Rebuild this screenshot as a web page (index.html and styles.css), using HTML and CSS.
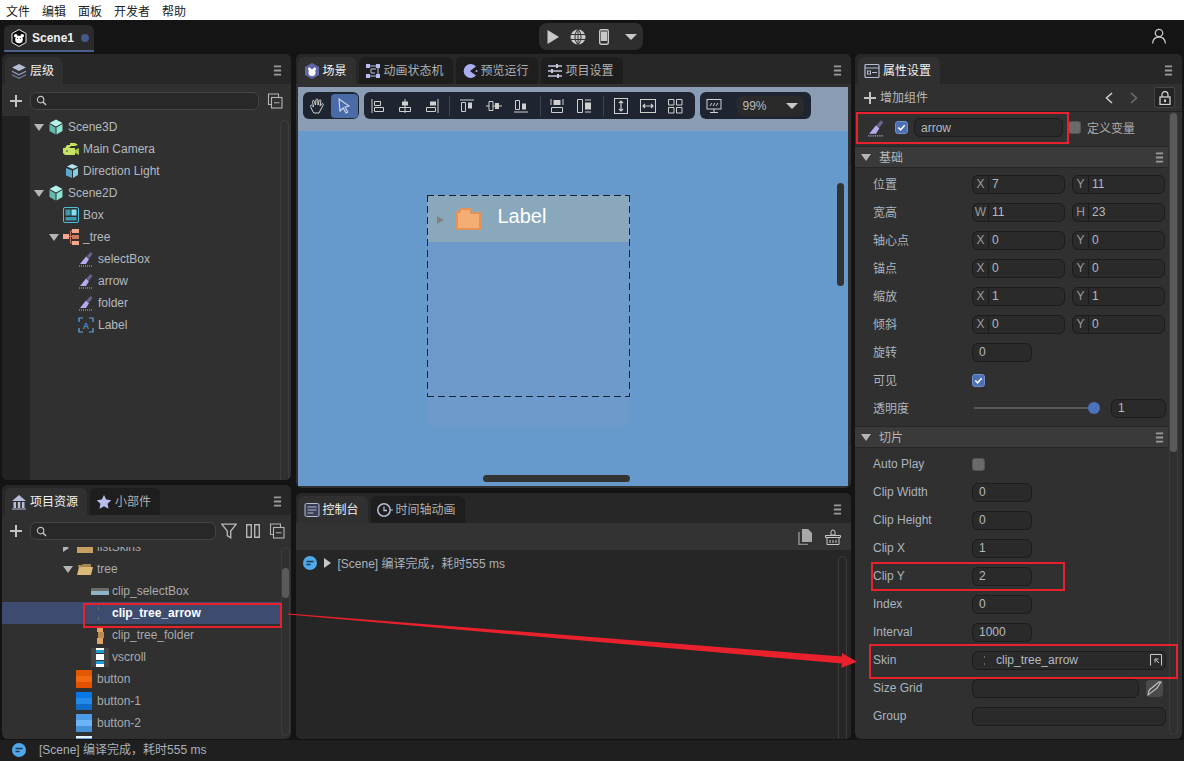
FILE: index.html
```html
<!DOCTYPE html>
<html>
<head>
    <meta charset="utf-8" />
    <title>LayaAir IDE</title>
    <link rel="stylesheet" href="styles.css">
</head>
<body>
    <!-- shared icons -->
    <svg class="defs" width="0" height="0">
        <symbol id="i-menu" viewBox="0 0 10 12"><path d="M1 1.500h8M1 6h8M1 10.500h8" stroke="#9a9a9a" stroke-width="2" fill="none"/></symbol>
        <symbol id="i-brush" viewBox="0 0 16 16"><path d="M12.500 1L14.500 3 11 7.500 8.500 5.500z" fill="#6b6290"/><path d="M8 5.500L11 8.200 8 13H2z" fill="#b9a9f0"/><path d="M1 15h14" stroke="#b9a9f0" stroke-dasharray="1 1" fill="none"/></symbol>
        <symbol id="i-cube" viewBox="0 0 16 16"><path d="M8 .5L14.500 4 8 7.500 1.500 4z" fill="#b4f4e8"/><path d="M1.500 5L7.500 8.500V15.500L1.500 12z" fill="#64b8ac"/><path d="M14.500 5L8.500 8.500V15.500L14.500 12z" fill="#8ce4d4"/></symbol>
        <symbol id="i-box3" viewBox="0 0 16 16"><path d="M9 1L15 3.500 10 6 4 3.500z" fill="#b5e4f0"/><path d="M3 5L9 7.500V15L3 12.500z" fill="#5ba8cc"/><path d="M10 7.500L15 5V12L10 15z" fill="#86cde6"/></symbol>
        <symbol id="i-cam" viewBox="0 0 16 16"><path d="M0 7h12v7H2l-2-2z" fill="#c6e264"/><path d="M12 9l4-2v7l-4-2z" fill="#a9c654"/><path d="M2 7l2-3h3V2h5l3 2-3 1H8L6 7z" fill="#c6e264"/><circle cx="4" cy="10" r="1" fill="#6d7d38"/></symbol>
        <symbol id="i-boxui" viewBox="0 0 16 16"><rect x=".5" y=".5" width="15" height="15" rx="1.500" fill="none" stroke="#53bcd8"/><rect x="2.500" y="2.500" width="5" height="6" fill="#3d97b0"/><rect x="8.500" y="2.500" width="5" height="6" fill="#7fe0f4"/><rect x="2.500" y="10" width="11" height="3.500" fill="#3d97b0"/></symbol>
        <symbol id="i-treeui" viewBox="0 0 16 16"><rect x="0" y="5" width="6" height="5" fill="#f5a78e"/><rect x="9" y="0" width="7" height="4" fill="#f5a78e"/><rect x="9" y="6" width="7" height="4" fill="#c9775f"/><rect x="9" y="12" width="7" height="4" fill="#f5a78e"/><path d="M6 7.500h3M7.500 2v12H9M7.500 2H9" stroke="#c9775f" fill="none"/></symbol>
        <symbol id="i-search" viewBox="0 0 12 12"><circle cx="5" cy="5" r="3.500" stroke="#bdbdbd" stroke-width="1.300" fill="none"/><path d="M7.500 7.500L11 11" stroke="#bdbdbd" stroke-width="1.600"/></symbol>
        <symbol id="i-collapse" viewBox="0 0 16 16"><path d="M4 11.500H1.500V1h10v3" fill="none" stroke="#b5b5b5" stroke-width="1.100"/><rect x="4.500" y="4.500" width="10.500" height="10.500" fill="none" stroke="#b5b5b5" stroke-width="1.100"/><path d="M7 9.800h5.500" stroke="#b5b5b5" stroke-width="1.100"/></symbol>
        <symbol id="i-plus" viewBox="0 0 12 12"><path d="M6 0v12M0 6h12" stroke="#c4c4c4" stroke-width="2"/></symbol>
        <symbol id="i-folder" viewBox="0 0 16 12"><path d="M0 1h6l1 2h9v9H0z" fill="#c6a062"/></symbol>
        <symbol id="i-folder-open" viewBox="0 0 16 12"><path d="M1 2h4l1-1h8v3H1z" fill="#a6864f"/><path d="M2 4h14l-2 8H0z" fill="#dcb878"/></symbol>
        <symbol id="i-chat" viewBox="0 0 14 14"><circle cx="7" cy="7" r="7" fill="#4fa8ea"/><path d="M3.500 5.500h7M3.500 8.500h4" stroke="#23364a" stroke-width="1.400"/></symbol>
        <symbol id="i-scenetab" viewBox="0 0 16 16"><path d="M8 0l7 4v8l-7 4-7-4V4z" fill="#6067a8"/><circle cx="8" cy="9.500" r="3.500" fill="#fff"/><circle cx="5.500" cy="6" r="1.500" fill="#fff"/><circle cx="10.500" cy="6" r="1.500" fill="#fff"/></symbol>
    </svg>

    <div class="menubar">
        <span>文件</span><span>编辑</span><span>面板</span><span>开发者</span><span>帮助</span>
    </div>

    <div class="topbar">
        <div class="doctab">
            <svg class="doclogo" viewBox="0 0 16 18"><path d="M8 .5l7 4v9l-7 4-7-4v-9z" fill="#0b0b0b" stroke="#e6e6e6"/><circle cx="8" cy="10.500" r="3.800" fill="#fff"/><circle cx="4.800" cy="6.800" r="1.800" fill="#fff"/><circle cx="11.200" cy="6.800" r="1.800" fill="#fff"/><circle cx="6.500" cy="9.500" r=".6" fill="#222"/><circle cx="9.500" cy="9.500" r=".6" fill="#222"/></svg>
            <span>Scene1</span>
            <i class="dot"></i>
        </div>
        <div class="runbar">
            <svg class="ico" viewBox="0 0 14 14"><path d="M1.500 0L13 7 1.500 14z" fill="#c8c8c8"/></svg>
            <svg class="ico" viewBox="0 0 16 16"><circle cx="8" cy="8" r="7.500" fill="#c8c8c8"/><path d="M0 5.500h16M0 10.500h16M8 0v16M8 .5C4 4 4 12 8 15.500M8 .5c4 3.500 4 11.500 0 15" stroke="#333" stroke-width="1" fill="none"/></svg>
            <svg class="ico" viewBox="0 0 10 16"><rect x=".7" y=".7" width="8.600" height="14.600" rx="1.500" fill="none" stroke="#c8c8c8" stroke-width="1.400"/><rect x="2" y="2.500" width="6" height="9.500" fill="#c8c8c8"/></svg>
            <i class="caret big"></i>
        </div>
        <svg class="user" viewBox="0 0 16 16"><circle cx="8" cy="5" r="3.700" fill="none" stroke="#c8c8c8" stroke-width="1.300"/><path d="M1.500 15.500c.5-4.500 3-6.500 6.500-6.500s6 2 6.500 6.500" fill="none" stroke="#c8c8c8" stroke-width="1.300"/></svg>
    </div>

    <div class="workspace">
        <div class="column">
            <!-- hierarchy -->
            <section class="panel hierarchy">
                <div class="tabs">
                    <div class="tab on">
                        <svg class="ico" viewBox="0 0 16 16"><path d="M8 1l7 3.500L8 8 1 4.500z" fill="#b4bcd8"/><path d="M1 7.500L8 11l7-3.500V9l-7 3.500L1 9z" fill="#8f97b4"/><path d="M1 11l7 3.500 7-3.500v1.500L8 16l-7-3.500z" fill="#6d7590"/></svg>
                        <span>层级</span>
                    </div>
                    <svg class="menuico"><use href="#i-menu"/></svg>
                </div>
                <div class="tools">
                    <svg class="plus"><use href="#i-plus"/></svg>
                    <div class="search"><svg class="searchico"><use href="#i-search"/></svg></div>
                    <svg class="ico"><use href="#i-collapse"/></svg>
                </div>
                <div class="treewrap">
                    <div class="gutter"></div>
                    <div class="tree">
                        <div class="row lv0"><i class="tri"></i><svg class="ico"><use href="#i-cube"/></svg>Scene3D</div>
                        <div class="row lv1"><i class="tri none"></i><svg class="ico"><use href="#i-cam"/></svg>Main Camera</div>
                        <div class="row lv1"><i class="tri none"></i><svg class="ico"><use href="#i-box3"/></svg>Direction Light</div>
                        <div class="row lv0"><i class="tri"></i><svg class="ico"><use href="#i-cube"/></svg>Scene2D</div>
                        <div class="row lv1"><i class="tri none"></i><svg class="ico"><use href="#i-boxui"/></svg>Box</div>
                        <div class="row lv1"><i class="tri"></i><svg class="ico"><use href="#i-treeui"/></svg>_tree</div>
                        <div class="row lv2"><i class="tri none"></i><svg class="ico"><use href="#i-brush"/></svg>selectBox</div>
                        <div class="row lv2"><i class="tri none"></i><svg class="ico"><use href="#i-brush"/></svg>arrow</div>
                        <div class="row lv2"><i class="tri none"></i><svg class="ico"><use href="#i-brush"/></svg>folder</div>
                        <div class="row lv2"><i class="tri none"></i><svg class="ico" viewBox="0 0 16 16"><path d="M1 5V1h4M11 1h4v4M15 11v4h-4M5 15H1v-4" stroke="#62a8e8" stroke-width="1.200" fill="none"/><text x="8" y="11.500" text-anchor="middle" class="svgtext">A</text></svg>Label</div>
                    </div>
                    <div class="track track-hier"></div>
                </div>
            </section>

            <!-- project assets -->
            <section class="panel assets">
                <div class="tabs">
                    <div class="tab on">
                        <svg class="ico" viewBox="0 0 16 16"><path d="M8 1L15 7H1z" fill="#b4bcd8"/><path d="M2.500 8h2.500v6H2.500zM6.800 8h2.500v6H6.800zM11 8h2.500v6H11z" fill="#b4bcd8"/><path d="M1 15h14" stroke="#b4bcd8"/></svg>
                        <span>项目资源</span>
                    </div>
                    <div class="tab">
                        <svg class="ico" viewBox="0 0 16 16"><path d="M8 1l2.200 4.500 5 .7-3.600 3.500.9 5L8 12.300 3.500 14.700l.9-5L.8 6.200l5-.7z" fill="#b9bdf0"/></svg>
                        <span>小部件</span>
                    </div>
                    <svg class="menuico"><use href="#i-menu"/></svg>
                </div>
                <div class="tools">
                    <svg class="plus"><use href="#i-plus"/></svg>
                    <div class="search"><svg class="searchico"><use href="#i-search"/></svg></div>
                    <svg class="ico" viewBox="0 0 14 14"><path d="M.7 1h12.600L8.500 7v6l-3-2V7z" fill="none" stroke="#b5b5b5" stroke-width="1.200"/></svg>
                    <svg class="ico" viewBox="0 0 14 14"><path d="M1.500 1.500h4v11h-4zM8.500 1.500h4v11h-4z" fill="none" stroke="#b5b5b5" stroke-width="1.200"/></svg>
                    <svg class="ico"><use href="#i-collapse"/></svg>
                </div>
                <div class="assetlist">
                    <div class="assetrows">
                        <div class="arow lvfolder"><i class="tri side"></i><svg class="fico"><use href="#i-folder"/></svg>listSkins</div>
                        <div class="arow lvfolder"><i class="tri"></i><svg class="fico"><use href="#i-folder-open"/></svg>tree</div>
                        <div class="arow lvclip"><i class="thumb selbox"></i>clip_selectBox</div>
                        <div class="arow lvclip sel"><i class="thumb arrowthumb"><b></b><b></b></i>clip_tree_arrow</div>
                        <div class="arow lvclip"><i class="thumb folderthumb"><b></b><b></b><b></b></i>clip_tree_folder</div>
                        <div class="arow lvclip"><i class="thumb scrollthumb"><b></b></i>vscroll</div>
                        <div class="arow lvitem"><i class="btnthumb orange"></i>button</div>
                        <div class="arow lvitem"><i class="btnthumb blue"></i>button-1</div>
                        <div class="arow lvitem"><i class="btnthumb light"></i>button-2</div>
                        <div class="arow lvitem"><i class="btnthumb white"></i></div>
                    </div>
                    <div class="track track-assets"><div class="thumbbar"></div></div>
                </div>
            </section>
        </div>

        <div class="column mid">
            <!-- scene view -->
            <section class="panel sceneview">
                <div class="tabs">
                    <div class="tab on"><svg class="ico"><use href="#i-scenetab"/></svg><span>场景</span></div>
                    <div class="tab">
                        <svg class="ico" viewBox="0 0 16 16"><rect x="1" y="1" width="4" height="4" fill="#b4bcf0"/><rect x="11" y="1" width="4" height="4" fill="#b4bcf0"/><rect x="1" y="11" width="4" height="4" fill="#b4bcf0"/><rect x="11" y="11" width="4" height="4" fill="#b4bcf0"/><path d="M5 3h6M5 13h6M13 5v6M11 6H6v4h4" fill="none" stroke="#b4bcf0"/></svg>
                        <span>动画状态机</span>
                    </div>
                    <div class="tab">
                        <svg class="ico" viewBox="0 0 16 16"><path d="M14 3.500A7 7 0 1 0 14 12.500L8 8z" fill="#a9aef0"/><circle cx="14.500" cy="8" r="1" fill="#a9aef0"/></svg>
                        <span>预览运行</span>
                    </div>
                    <div class="tab">
                        <svg class="ico" viewBox="0 0 16 16"><path d="M1 3h14M1 8h14M1 13h14" stroke="#c4c8dc" stroke-width="1.400"/><rect x="9" y="1" width="2" height="4" fill="#c4c8dc"/><rect x="4" y="6" width="2" height="4" fill="#c4c8dc"/><rect x="10" y="11" width="2" height="4" fill="#c4c8dc"/></svg>
                        <span>项目设置</span>
                    </div>
                    <svg class="menuico"><use href="#i-menu"/></svg>
                </div>
                <div class="canvas">
                    <div class="canvastop">
                        <div class="toolgroup">
                            <span class="tool"><svg class="ico" viewBox="0 0 16 16"><path d="M4 14L1.500 8.500c-.5-1.200 1-2 1.800-.8L4.500 9 3.500 3.500c-.2-1.300 1.500-1.500 1.800-.3L6.500 7 7 1.800c.1-1.200 1.700-1.200 1.800 0L9 7l1.200-4.500c.3-1.200 1.900-.8 1.700.4L11 8l1.700-2c.8-1 2.200-.1 1.500 1L11.500 12 10 15H5z" fill="none" stroke="#d0d0d0"/></svg></span>
                            <span class="tool active"><svg class="ico" viewBox="0 0 16 16"><path d="M3 1l10 7-4 1 2.800 5-1.800 1-2.800-5L4 13z" fill="none" stroke="#cfd8f0" stroke-width="1.100"/></svg></span>
                        </div>
                        <div class="toolgroup wide">
                            <span class="tool"><svg class="ico" viewBox="0 0 14 16"><path d="M1 1v14" stroke="#d0d0d0"/><path d="M3.500 3.500h6v4h-6zM3.500 9.500h9v4h-9z" fill="none" stroke="#d0d0d0"/></svg></span>
                            <span class="tool"><svg class="ico" viewBox="0 0 14 16"><path d="M7 1v14" stroke="#d0d0d0"/><path d="M4 3.500h6v4H4z" fill="#d0d0d0"/><path d="M1.500 9.500h11v4h-11z" fill="none" stroke="#d0d0d0"/></svg></span>
                            <span class="tool"><svg class="ico" viewBox="0 0 14 16"><path d="M13 1v14" stroke="#d0d0d0"/><path d="M5 3.500h6v4H5z" fill="#d0d0d0"/><path d="M1.500 9.500h9v4h-9z" fill="none" stroke="#d0d0d0"/></svg></span>
                            <i class="sep"></i>
                            <span class="tool"><svg class="ico" viewBox="0 0 16 14"><path d="M1 1h14" stroke="#d0d0d0"/><path d="M2.500 3.500h4v9h-4z" fill="none" stroke="#d0d0d0"/><path d="M9 3.500h4v6H9z" fill="#d0d0d0"/></svg></span>
                            <span class="tool"><svg class="ico" viewBox="0 0 16 14"><path d="M0 7h16" stroke="#d0d0d0"/><path d="M3 2.500h4v9H3z" fill="#1e2530" stroke="#d0d0d0"/><path d="M9 4h4v6H9z" fill="#d0d0d0"/></svg></span>
                            <span class="tool"><svg class="ico" viewBox="0 0 16 14"><path d="M1 13h14" stroke="#d0d0d0"/><path d="M2.500 1.500h4v9h-4z" fill="none" stroke="#d0d0d0"/><path d="M9 4.500h4v6H9z" fill="#d0d0d0"/></svg></span>
                            <i class="sep s2"></i>
                            <span class="tool"><svg class="ico" viewBox="0 0 16 16"><path d="M2 1v6M14 1v6" stroke="#d0d0d0"/><path d="M4.500 2h7v5h-7z" fill="#d0d0d0"/><path d="M2.500 9.500h11v5h-11z" fill="none" stroke="#d0d0d0"/></svg></span>
                            <span class="tool"><svg class="ico" viewBox="0 0 16 16"><path d="M1.500 1.500h5v13h-5z" fill="none" stroke="#d0d0d0"/><path d="M9 2h6M9 14h6" stroke="#d0d0d0"/><path d="M9 4.500h6v7H9z" fill="#d0d0d0"/></svg></span>
                            <i class="sep s3"></i>
                            <span class="tool"><svg class="ico" viewBox="0 0 16 16"><rect x="1.500" y=".5" width="13" height="15" fill="none" stroke="#d0d0d0"/><path d="M8 3v10M6 5l2-2 2 2M6 11l2 2 2-2" fill="none" stroke="#d0d0d0" stroke-width="1.200"/></svg></span>
                            <span class="tool"><svg class="ico" viewBox="0 0 16 16"><rect x=".5" y="1.500" width="15" height="13" fill="none" stroke="#d0d0d0"/><path d="M3 8h10M5 6L3 8l2 2M11 6l2 2-2 2" fill="none" stroke="#d0d0d0" stroke-width="1.200"/></svg></span>
                            <span class="tool"><svg class="ico" viewBox="0 0 16 16"><path d="M1.500 1.500h5.500v5.500H1.500zM9.500 1.500h5.500v5.500H9.500zM1.500 9.500h5.500v5.500H1.500zM9.500 9.500h5.500v5.500H9.500z" fill="none" stroke="#d0d0d0"/></svg></span>
                        </div>
                        <div class="toolgroup zoom">
                            <svg class="ico" viewBox="0 0 16 16"><rect x="1" y="1.500" width="14" height="9.500" fill="none" stroke="#d0d0d0"/><path d="M4 8l2-3M7 8l2-3M10 8l2-3M8 11v3M4 14.500h8" stroke="#d0d0d0" fill="none"/></svg>
                            <div class="zoomselect"><span>99%</span><i class="caret big"></i></div>
                        </div>
                    </div>
                    <!-- stage content sits freely on the canvas -->
                    <div class="stagebg"></div>
                    <div class="stage">
                        <div class="stagerow">
                            <i class="stagetri"></i>
                            <svg class="stagefolder" viewBox="0 0 25 22"><path d="M1 4h3V1h11v4h9v16H1z" fill="#f4ae74" stroke="#e3935a" stroke-width="2"/></svg>
                            <span>Label</span>
                        </div>
                    </div>
                    <div class="vbar"></div>
                    <div class="hbar"></div>
                </div>
            </section>

            <!-- console -->
            <section class="panel console">
                <div class="tabs">
                    <div class="tab on">
                        <svg class="ico" viewBox="0 0 16 16"><rect x="1" y="1.500" width="14" height="13" rx="1.500" fill="#3a3f55" stroke="#b4bcd8"/><path d="M3.500 5h9M3.500 8h9M3.500 11h6" stroke="#b4bcd8"/></svg>
                        <span>控制台</span>
                    </div>
                    <div class="tab">
                        <svg class="ico" viewBox="0 0 16 16"><circle cx="7" cy="8" r="6.200" fill="none" stroke="#b4bcd8" stroke-width="1.500"/><path d="M7 4.500V8.500h3" fill="none" stroke="#b4bcd8" stroke-width="1.300"/><path d="M13 8h3" stroke="#b4bcd8"/></svg>
                        <span>时间轴动画</span>
                    </div>
                    <svg class="menuico"><use href="#i-menu"/></svg>
                </div>
                <div class="consolebar">
                    <svg class="ico" viewBox="0 0 14 16"><path d="M4 0h6l4 4v9H4z" fill="#a8a8a8"/><path d="M1 3v12.500h9" fill="none" stroke="#8a8a8a" stroke-width="1.600"/></svg>
                    <svg class="ico" viewBox="0 0 16 16"><path d="M8 1a2 2 0 0 1 2 2v3h-4V3a2 2 0 0 1 2-2z" fill="none" stroke="#c8c8c8"/><path d="M.5 6.500h15v2H.5zM2 8.500h12v7H2z" fill="none" stroke="#c8c8c8"/><path d="M5 11v3M8 11v3M11 11v3" stroke="#c8c8c8"/></svg>
                </div>
                <div class="consolelog">
                    <div class="logline">
                        <svg class="chat"><use href="#i-chat"/></svg>
                        <i class="logtri"></i>
                        <span>[Scene] 编译完成，耗时555 ms</span>
                    </div>
                    <div class="track track-console"></div>
                </div>
            </section>
        </div>

        <!-- properties -->
        <section class="panel props">
            <div class="tabs">
                <div class="tab on">
                    <svg class="ico" viewBox="0 0 16 16"><rect x="1" y="1.500" width="14" height="13" rx="1" fill="none" stroke="#b4bcd8" stroke-width="1.200"/><path d="M1 5h14" stroke="#b4bcd8"/><rect x="3.500" y="8" width="3" height="3" fill="none" stroke="#b4bcd8"/><path d="M8 9.500h5" stroke="#b4bcd8"/></svg>
                    <span>属性设置</span>
                </div>
                <svg class="menuico"><use href="#i-menu"/></svg>
            </div>
            <div class="addbar">
                <svg class="plus"><use href="#i-plus"/></svg>
                <span class="addtext">增加组件</span>
                <svg class="chev" viewBox="0 0 8 12"><path d="M7 1L1.500 6 7 11" fill="none" stroke="#d0d0d0" stroke-width="1.500"/></svg>
                <svg class="chev" viewBox="0 0 8 12"><path d="M1 1l5.500 5L1 11" fill="none" stroke="#6e6e6e" stroke-width="1.500"/></svg>
                <span class="lock"><svg class="lockico" viewBox="0 0 12 14"><path d="M3 6V3.500a3 3 0 0 1 6 0V6" fill="none" stroke="#d0d0d0" stroke-width="1.300"/><rect x="1" y="6" width="10" height="7.500" fill="none" stroke="#d0d0d0" stroke-width="1.300"/><rect x="5" y="8.500" width="2" height="2.500" fill="#d0d0d0"/></svg></span>
            </div>
            <div class="namerow">
                <svg class="namebrush"><use href="#i-brush"/></svg>
                <span class="check on"><svg viewBox="0 0 12 12"><path d="M2.500 6l2.500 2.500 4.500-5" fill="none" stroke="#fff" stroke-width="1.700"/></svg></span>
                <div class="field namefield">arrow</div>
                <span class="check off"></span>
                <span class="vartext">定义变量</span>
            </div>

            <div class="section"><i class="tri"></i><span>基础</span><svg class="menuico"><use href="#i-menu"/></svg></div>
            <div class="prop"><label class="cn">位置</label><div class="field pair"><em>X</em>7</div><div class="field pair"><em>Y</em>11</div></div>
            <div class="prop"><label class="cn">宽高</label><div class="field pair"><em>W</em>11</div><div class="field pair"><em>H</em>23</div></div>
            <div class="prop"><label class="cn">轴心点</label><div class="field pair"><em>X</em>0</div><div class="field pair"><em>Y</em>0</div></div>
            <div class="prop"><label class="cn">锚点</label><div class="field pair"><em>X</em>0</div><div class="field pair"><em>Y</em>0</div></div>
            <div class="prop"><label class="cn">缩放</label><div class="field pair"><em>X</em>1</div><div class="field pair"><em>Y</em>1</div></div>
            <div class="prop"><label class="cn">倾斜</label><div class="field pair"><em>X</em>0</div><div class="field pair"><em>Y</em>0</div></div>
            <div class="prop"><label class="cn">旋转</label><div class="field num">0</div></div>
            <div class="prop"><label class="cn">可见</label><span class="check on"><svg viewBox="0 0 12 12"><path d="M2.500 6l2.500 2.500 4.500-5" fill="none" stroke="#fff" stroke-width="1.700"/></svg></span></div>
            <div class="prop"><label class="cn">透明度</label><div class="slider"><i class="knob"></i></div><div class="field opacity">1</div></div>

            <div class="section"><i class="tri"></i><span>切片</span><svg class="menuico"><use href="#i-menu"/></svg></div>
            <div class="prop"><label>Auto Play</label><span class="check off"></span></div>
            <div class="prop"><label>Clip Width</label><div class="field num">0</div></div>
            <div class="prop"><label>Clip Height</label><div class="field num">0</div></div>
            <div class="prop"><label>Clip X</label><div class="field num">1</div></div>
            <div class="prop"><label>Clip Y</label><div class="field num">2</div></div>
            <div class="prop"><label>Index</label><div class="field num">0</div></div>
            <div class="prop"><label>Interval</label><div class="field num">1000</div></div>
            <div class="prop"><label>Skin</label>
                <div class="field skin"><i class="skindots"><b></b><b></b></i>clip_tree_arrow
                    <svg class="skinico" viewBox="0 0 12 12"><path d="M.5 11.500V.5h11v11" fill="none" stroke="#c8c8c8"/><path d="M9 9L5 5M5 8.500V5h3.500" fill="none" stroke="#c8c8c8"/></svg>
                </div>
            </div>
            <div class="prop"><label>Size Grid</label><div class="field grid"></div>
                <span class="gridbtn"><svg viewBox="0 0 16 16"><path d="M14 2L10 8 6 11 2 14c0-3 2-6 4-7l6-5z" fill="none" stroke="#c8c8c8"/></svg></span>
            </div>
            <div class="prop"><label>Group</label><div class="field long"></div></div>

            <div class="track track-props"><div class="thumbbar"></div></div>
        </section>
    </div>

    <div class="statusbar">
        <svg class="chat"><use href="#i-chat"/></svg>
        <span>[Scene] 编译完成，耗时555 ms</span>
    </div>

    <!-- red annotations drawn on top of the screenshot -->
    <div class="mark m-name"></div>
    <div class="mark m-asset"></div>
    <div class="mark m-clipy"></div>
    <div class="mark m-skin"></div>
    <svg class="arrowlayer" viewBox="0 0 1184 761" width="1184" height="761">
        <path d="M288 613.500L842 656.500 842 653 857 661.700 841 668 842 663.500 288 614.500z" fill="#e8212c"/>
    </svg>
</body>
</html>
```

FILE: styles.css
```css
*{
    padding:0;
    margin:0;
    box-sizing:border-box;
}
html,body{
    width:1184px;
    height:761px;
    overflow:hidden;
}
body{
    position:relative;
    display:flex;
    flex-direction:column;
    background:#1f1f1f;
    font:12px "Liberation Sans","Noto Sans CJK SC",sans-serif;
    color:#b4b9c0;
}
i,em{
    font-style:normal;
    display:block;
}
.defs{
    position:absolute;
}
.svgtext{
    font:bold 9px "Liberation Sans",sans-serif;
    fill:#4f87c0;
}
.ico{
    width:16px;
    height:16px;
    flex:none;
}

/* menu + top bar */
.menubar{
    height:20px;
    background:#fff;
    color:#222;
    display:flex;
    align-items:center;
    gap:12px;
    padding-left:6px;
}
.topbar{
    position:relative;
    height:34px;
    background:#141414;
    display:flex;
    align-items:flex-start;
    padding:5px 0 0 4px;
}
.doctab{
    width:90px;
    height:27px;
    background:#2a2a2a;
    border-radius:6px 6px 0 0;
    border-bottom:2px solid #4a5f8e;
    display:flex;
    align-items:center;
    padding-left:7px;
    color:#f0f0f0;
    font-weight:bold;
}
.doclogo{
    width:16px;
    height:18px;
    margin-right:5px;
}
.dot{
    width:8px;
    height:8px;
    border-radius:50%;
    background:#44588c;
    margin-left:7px;
}
.runbar{
    position:absolute;
    left:539px;
    top:3px;
    width:104px;
    height:27px;
    background:#2e2e2e;
    border-radius:8px;
    display:flex;
    align-items:center;
    gap:10px;
    padding-left:7px;
}
.runbar .ico:first-child{
    width:14px;
    height:14px;
}
.caret{
    width:0;
    height:0;
    border-style:solid;
    border-color:#c8c8c8 transparent transparent;
    border-width:5px 5px 0;
}
.caret.big{
    border-width:6px 6px 0;
    margin-left:3px;
}
.user{
    position:absolute;
    left:1151px;
    top:8px;
    width:16px;
    height:16px;
}

/* panels */
.workspace{
    height:686px;
    padding:0 2px;
    display:grid;
    grid-template-columns:289px 555px 327px;
    column-gap:4.5px;
    background:#141414;
}
.column{
    display:grid;
    grid-template-rows:426px 254px;
    row-gap:5px;
    height:685px;
}
.column.mid{
    grid-template-rows:434px 246px;
}
.panel{
    position:relative;
    background:#303030;
    border-radius:6px;
    overflow:hidden;
    display:flex;
    flex-direction:column;
    height:100%;
}
.props{
    height:685px;
    display:block;
}
.tabs{
    position:relative;
    height:30px;
    background:#272727;
    display:flex;
    gap:3px;
    align-items:flex-end;
    padding-left:3px;
    flex:none;
}
.mid .tabs{
    padding-left:2px;
}
.tab{
    height:27px;
    display:flex;
    align-items:center;
    gap:3px;
    padding:0 9px 0 6px;
    background:#1e1e1e;
    border-radius:6px 6px 0 0;
    color:#b0b0b0;
}
.tab span{
    padding-bottom:3px;
}
.tab.on{
    background:#303030;
    color:#f2f2f2;
}
.menuico{
    position:absolute;
    right:9px;
    top:11px;
    width:9px;
    height:11px;
}

/* hierarchy */
.tools{
    height:31px;
    display:flex;
    align-items:center;
    gap:8px;
    padding:0 8px 0 8px;
    flex:none;
}
.hierarchy .tools{
    height:32px;
    padding-top:1px;
}
.plus{
    width:12px;
    height:12px;
    flex:none;
}
.search{
    flex:1;
    height:18px;
    background:#282828;
    border:1px solid #444;
    border-radius:6px;
    display:flex;
    align-items:center;
    padding-left:5px;
}
.searchico{
    width:11px;
    height:11px;
}
.assets .tools{
    height:32px;
    padding-right:6px;
}
.assets .tools .search{
    margin-right:-3px;
}
.treewrap{
    position:relative;
    flex:1;
    display:flex;
}
.gutter{
    width:28px;
    background:#222;
}
.tree{
    flex:1;
    background:#303030;
}
.row{
    height:22px;
    display:flex;
    align-items:center;
}
.row .ico{
    margin-right:4px;
}
.lv0{ padding-left:4px; }
.lv1{ padding-left:19px; }
.lv2{ padding-left:34px; }
.tri{
    width:14px;
    height:7px;
    flex:none;
    position:relative;
}
.tri::before{
    content:"";
    position:absolute;
    left:0;
    top:0;
    border-style:solid;
    border-color:#b5b5b5 transparent transparent;
    border-width:7px 5px 0;
}
.tri.none::before{
    display:none;
}
.tri.side::before{
    border-color:transparent transparent transparent #b5b5b5;
    border-width:4px 0 4px 6px;
}
.track{
    position:absolute;
    border:1px solid #3c3c3c;
    border-radius:5px;
    width:9px;
}
.track-hier{
    right:2px;
    top:4px;
    bottom:-6px;
}
.thumbbar{
    background:#5a5a5a;
    border-radius:4px;
    width:7px;
}

/* project assets */
.assetlist{
    position:relative;
    flex:1;
    overflow:hidden;
}
.assetrows{
    margin-top:-11px;
}
.arow{
    height:22px;
    display:flex;
    align-items:center;
    color:#aaa;
}
.arow.sel{
    background:#3d4c6e;
    color:#fff;
    font-weight:bold;
    width:279px;
}
.lvfolder{ padding-left:61px; }
.lvclip{ padding-left:89px; }
.lvitem{ padding-left:74px; }
.fico{
    width:16px;
    height:12px;
    margin-right:4px;
}
.thumb{
    width:18px;
    height:19px;
    margin-right:3px;
    flex:none;
    position:relative;
}
.thumb.selbox{
    height:7px;
    background:linear-gradient(#6b6b6b 40%,#8fb3c8 40%);
}
.arrowthumb b{
    position:absolute;
    left:7px;
    width:1px;
    height:3px;
    background:#6a6a6a;
}
.arrowthumb b:first-child{ top:3px; }
.arrowthumb b:last-child{ top:13px; }
.folderthumb b{
    position:absolute;
    left:6px;
    width:6px;
    height:6px;
    background:#e0a468;
}
.folderthumb b:nth-child(1){ top:0; }
.folderthumb b:nth-child(2){ top:6px; background:#b98a55; left:7px; }
.folderthumb b:nth-child(3){ top:12px; }
.scrollthumb{
    background:#444;
}
.scrollthumb b{
    position:absolute;
    left:5px;
    top:0;
    width:8px;
    height:19px;
    background:linear-gradient(#fff 0 2px,#1d9ad6 2px 5px,#333 5px 6px,#fff 6px 12px,#333 12px 13px,#1d9ad6 13px 16px,#fff 16px);
}
.btnthumb{
    width:16px;
    height:18px;
    margin-right:5px;
    flex:none;
}
.btnthumb.orange{
    background:linear-gradient(#e25a00 0 6px,#f26a10 6px 12px,#e25000 12px);
}
.btnthumb.blue{
    background:linear-gradient(#0877e6 0 6px,#2489e8 6px 12px,#0e6cc8 12px);
}
.btnthumb.light{
    background:linear-gradient(#4b9be8 0 6px,#6cb4f4 6px 12px,#4690d8 12px);
}
.btnthumb.white{
    background:linear-gradient(#e8f0fa 0 2px,#6aa6de 2px);
}
.track-assets{
    right:1px;
    top:0;
    bottom:3px;
}
.track-assets .thumbbar{
    margin-top:20px;
    height:30px;
}

/* scene */
.sceneview .tabs{
    margin-bottom:3px;
}
.canvas{
    position:relative;
    flex:1;
    margin:0 3px 2px 2px;
    background:#6699cc;
    overflow:hidden;
}
.canvastop{
    height:44px;
    background:#8a9db5;
    display:flex;
    gap:5px;
    padding:5px 0 0 5px;
    align-items:flex-start;
}
.toolgroup{
    height:27px;
    background:#1e2530;
    border-radius:6px;
    display:flex;
    align-items:center;
    padding:0 1px;
    color:#bbb;
}
.tool{
    width:27px;
    height:24px;
    display:flex;
    align-items:center;
    justify-content:center;
    border-radius:4px;
}
.tool.active{
    background:#4a6aa8;
}
.toolgroup.wide{
    width:331px;
    padding:0 3px 0 1px;
}
.sep{
    width:1px;
    height:20px;
    background:#3e4654;
    margin:0 4px 0 3px;
}
.sep.s2{
    margin:0 3px 0 5px;
}
.sep.s3{
    margin:0 4px 0 5px;
}
.toolgroup.zoom{
    width:111px;
    padding-left:6px;
    gap:15px;
}
.zoomselect{
    width:67px;
    height:20px;
    background:#2a2a2a;
    border-radius:6px;
    display:flex;
    align-items:center;
    justify-content:space-between;
    padding:0 6px;
    color:#bbb;
}
.stagebg{
    position:absolute;
    left:130px;
    top:109px;
    width:201px;
    height:230px;
    background:#6d9acb;
}
.stage{
    position:absolute;
    left:129px;
    top:108px;
    width:203px;
    height:202px;
}
.stage::after{
    content:"";
    position:absolute;
    inset:0;
    background:
        repeating-linear-gradient(90deg,#1a2430 0 7px,transparent 7px 11px) top/100% 1px no-repeat,
        repeating-linear-gradient(90deg,#1a2430 0 7px,transparent 7px 11px) bottom/100% 1px no-repeat,
        repeating-linear-gradient(#1a2430 0 7px,transparent 7px 11px) left/1px 100% no-repeat,
        repeating-linear-gradient(#1a2430 0 7px,transparent 7px 11px) right/1px 100% no-repeat;
}
.stagerow{
    height:47px;
    background:#8aa8bc;
    display:flex;
    align-items:center;
    padding:2px 0 0 10px;
    color:#fff;
    font-size:20px;
}
.stagerow span{
    padding-bottom:7px;
}
.stagetri{
    width:0;
    height:0;
    border-style:solid;
    border-color:transparent transparent transparent #808080;
    border-width:4px 0 4px 7px;
    margin-right:12px;
}
.stagefolder{
    width:25px;
    height:22px;
    margin:0 17px 2px 0;
}
.vbar{
    position:absolute;
    right:4px;
    top:96px;
    width:7px;
    height:103px;
    background:#333;
    border-radius:4px;
}
.hbar{
    position:absolute;
    left:185px;
    bottom:4px;
    width:147px;
    height:7px;
    background:#333;
    border-radius:4px;
}

/* console */
.consolebar{
    height:27px;
    background:#333;
    display:flex;
    align-items:center;
    justify-content:flex-end;
    gap:12px;
    padding-right:10px;
    flex:none;
}
.consolelog{
    position:relative;
    flex:1;
    background:#262626;
}
.logline{
    display:flex;
    align-items:center;
    height:26px;
    padding-left:7px;
    color:#aab0b8;
}
.logline span{
    padding-bottom:2px;
}
.chat{
    width:14px;
    height:14px;
    flex:none;
}
.logtri{
    width:0;
    height:0;
    border-style:solid;
    border-color:transparent transparent transparent #c8c8c8;
    border-width:5px 0 5px 7px;
    margin:0 7px;
}
.track-console{
    right:4px;
    top:6px;
    bottom:-4px;
}

/* properties */
.addbar{
    height:28px;
    display:flex;
    align-items:center;
    padding-left:9px;
    color:#b8b8b8;
    border-bottom:1px solid #222;
}
.addtext{
    margin-left:4px;
    flex:1;
    padding-bottom:3px;
}
.chev{
    width:8px;
    height:12px;
    margin-right:17px;
}
.lock{
    width:21px;
    height:21px;
    margin-right:7px;
    margin-left:-1px;
    border:1px solid #444;
    border-radius:2px;
    background:#232323;
    display:flex;
    align-items:center;
    justify-content:center;
}
.lockico{
    width:12px;
    height:14px;
}
.namerow{
    height:30px;
    display:flex;
    align-items:center;
    padding:1px 0 0 12px;
}
.namebrush{
    width:18px;
    height:18px;
    margin-right:10px;
}
.check{
    width:13px;
    height:13px;
    border-radius:3px;
    flex:none;
}
.check.on{
    background:#4d6fb5;
    border:1px solid #6f8fd0;
}
.check.on svg{
    display:block;
    width:11px;
    height:11px;
}
.check.off{
    background:#6a6a6a;
    border:1px solid #555;
}
.field{
    height:19px;
    background:#2a2a2a;
    border:1px solid #1c1c1c;
    border-radius:6px;
    display:flex;
    align-items:center;
    padding-left:6px;
    color:#b4b9c0;
}
.namefield{
    width:149px;
    height:19px;
    margin:0 5px 0 6px;
}
.vartext{
    margin-left:6px;
    color:#aaa;
    padding-bottom:1px;
}
.section{
    position:relative;
    height:22px;
    margin:4px 0 2px;
    width:313px;
    background:#3a3a3a;
    border-top:1px solid #262626;
    border-bottom:1px solid #262626;
    display:flex;
    align-items:center;
    padding-left:6px;
    color:#b8b8b8;
}
.section span{
    padding-bottom:2px;
}
.section .tri{
    width:18px;
}
.section .menuico{
    top:5px;
    right:4px;
}
.prop{
    height:28px;
    display:flex;
    align-items:center;
    padding-left:18px;
    gap:7px;
}
.prop label{
    width:99px;
    margin-right:-7px;
    color:#aab4be;
    flex:none;
}
.prop label.cn{
    padding-bottom:1px;
}
.pair{
    width:93px;
    padding-left:0;
}
.pair em{
    width:16px;
    height:100%;
    border-right:1px solid #1c1c1c;
    margin-right:3px;
    text-align:center;
    line-height:17px;
    color:#9a9a9a;
}
.num{
    width:60px;
}
.slider{
    width:114px;
    height:2px;
    margin-left:2px;
    background:#5a5a5a;
    position:relative;
}
.knob{
    position:absolute;
    left:114px;
    top:-5px;
    width:12px;
    height:12px;
    border-radius:50%;
    background:#4d72bd;
}
.opacity{
    width:55px;
    margin-left:16px;
}
.skin{
    position:relative;
    width:194px;
    padding-left:23px;
}
.skindots b{
    position:absolute;
    left:11px;
    width:1px;
    height:2px;
    background:#666;
}
.skindots b:first-child{ top:4px; }
.skindots b:last-child{ top:11px; }
.skinico{
    position:absolute;
    right:3px;
    top:2px;
    width:12px;
    height:12px;
}
.grid{
    width:167px;
}
.gridbtn{
    width:17px;
    height:17px;
    background:#4a4a4a;
    border-radius:4px;
    display:flex;
}
.gridbtn svg{
    width:100%;
    height:100%;
}
.long{
    width:194px;
}
.track-props{
    right:4px;
    top:58px;
    height:623px;
}
.track-props .thumbbar{
    height:339px;
}

.statusbar{
    flex:1;
    background:#1f1f1f;
    display:flex;
    align-items:center;
    gap:13px;
    padding:0 0 2px 12px;
    color:#aab0b8;
}
.statusbar span{
    padding-bottom:2px;
}

/* annotations */
.mark{
    position:absolute;
    border:2px solid #e8212c;
}
.m-name{
    left:856px;
    top:112px;
    width:213px;
    height:32px;
}
.m-asset{
    left:83px;
    top:603px;
    width:199px;
    height:25px;
}
.m-clipy{
    left:871px;
    top:562px;
    width:194px;
    height:29px;
}
.m-skin{
    left:869px;
    top:644px;
    width:309px;
    height:35px;
}
.arrowlayer{
    position:absolute;
    left:0;
    top:0;
}
```
